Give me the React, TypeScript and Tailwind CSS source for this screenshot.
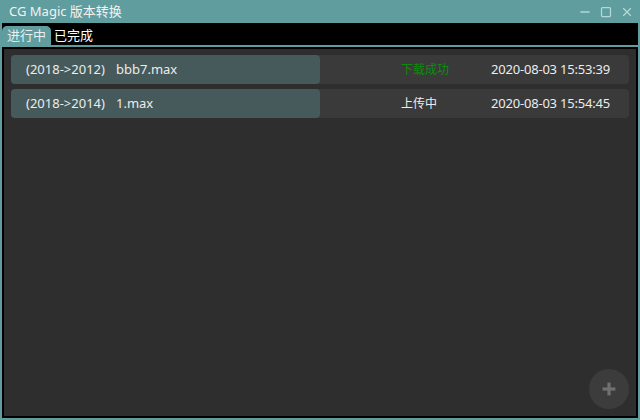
import { Minus, Square, X, Plus } from 'lucide-react';

type Task = {
  convert: string;
  file: string;
  status: string;
  done: boolean;
  time: string;
};

const TASKS: Task[] = [
  { convert: '(2018->2012)', file: 'bbb7.max', status: '下载成功', done: true, time: '2020-08-03 15:53:39' },
  { convert: '(2018->2014)', file: '1.max', status: '上传中', done: false, time: '2020-08-03 15:54:45' },
];

const font = { fontFamily: '"Noto Sans", "Noto Sans CJK SC", sans-serif' };

export default function App() {
  return (
    <div
      className="w-[640px] h-[420px] bg-[#5f9d9f] flex flex-col px-[2px] pb-[2px] text-[#ececec]"
      style={font}
    >
      {/* title bar */}
      <div className="h-[23px] flex items-center justify-between pl-[7px] pr-[4px]">
        <span className="text-[13px] leading-none text-[#f2f2f2]">CG Magic 版本转换</span>
        <div className="flex items-center gap-[8px] text-[#b5d8d8]">
          <Minus className="w-[14px] h-[14px]" strokeWidth={2.5} />
          <Square className="w-[12px] h-[12px]" strokeWidth={2.5} />
          <X className="w-[14px] h-[14px]" strokeWidth={2} />
        </div>
      </div>

      {/* tabs */}
      <div className="h-[22px] bg-black flex items-end">
        <div className="h-[19px] px-[5px] rounded-t-[5px] bg-[#5f9d9f] text-[13px] leading-[19px] text-[#e6f0f0]">
          进行中
        </div>
        <div className="h-[19px] px-[3px] text-[13px] leading-[19px] text-white">已完成</div>
      </div>
      <div className="h-[2px]" />

      {/* content */}
      <div className="flex-1 border-2 border-black bg-[#2e2e2e] relative">
        <div className="flex flex-col gap-[5px] pt-[6px] px-[7px]">
          {TASKS.map((t) => (
            <div key={t.time} className="h-[29px] flex rounded-[4px] bg-[#3a3a3a] text-[13px]">
              <div className="w-[309px] rounded-[4px] bg-[#465a5b] flex items-center pl-[15px]">
                <span className="w-[90px]">{t.convert}</span>
                <span>{t.file}</span>
              </div>
              <div className="flex items-center">
                <span className={`ml-[81px] w-[90px] text-[12px] ${t.done ? 'text-[#0e8a0e]' : 'text-[#ececec]'}`}>
                  {t.status}
                </span>
                <span className="tracking-[-0.2px]">{t.time}</span>
              </div>
            </div>
          ))}
        </div>
        <div className="absolute right-[7px] bottom-[7px] w-[40px] h-[40px] rounded-full bg-[#3c3c3c] flex items-center justify-center">
          <Plus className="w-[22px] h-[22px] text-[#707070]" strokeWidth={3.5} strokeLinecap="butt" />
        </div>
      </div>
    </div>
  );
}
